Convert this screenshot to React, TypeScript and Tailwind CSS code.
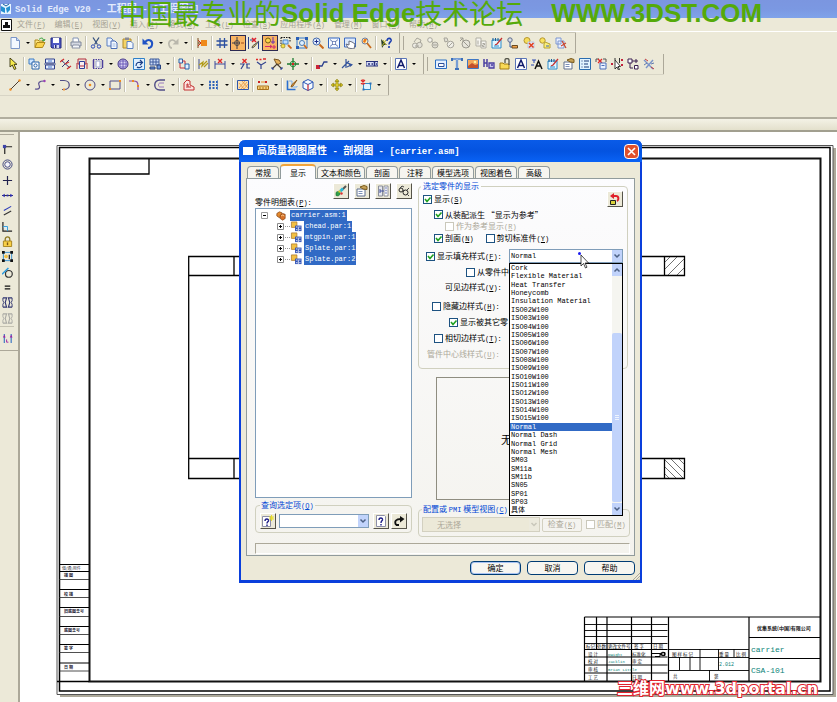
import { useState } from 'react'
import type { ReactNode } from 'react'
import clsx from 'clsx'

const CJK = 'font-["Noto_Sans_CJK_SC",sans-serif]'
const MONO = 'font-["Liberation_Mono","Noto_Sans_CJK_SC",monospace]'

type LineProps = { d: string; c?: string; f?: string; w?: number }

function P({ d, c = '#23236b', f = 'none', w = 1 }: LineProps) {
  return <path d={d} stroke={c} fill={f} strokeWidth={w} />
}

// All glyphs live on a 12x12 grid
const icons: Record<string, ReactNode> = {
  // standard bar
  new: <><P d="M2 .5h5.500l3 3v8H2z" c="#7b96c8" f="#f3f8ff" /><P d="M7.500 .5v3h3" c="#7b96c8" f="#c5d8f5" /></>,
  open: <><P d="M1 10.500V3h3l1 1h4v2" c="#b08a1c" f="#ffe680" /><P d="M1 10.500l2-5h8l-2.500 5z" c="#b08a1c" f="#fbd34b" /><P d="M5 2.500c2-2 4-2 5 1M8 3l2 1 1-2" c="#2d9c33" /></>,
  save: <><P d="M1 1h10v10H2L1 10z" c="#242a80" f="#4f58c4" /><path d="M3 1h6v5H3z" fill="#fff" /><path d="M4 8h5v3H4z" fill="#d6daf4" /><path d="M5 8h1.500v3H5z" fill="#242a80" /></>,
  print: <><P d="M3 5V1h5l1 4" c="#8393b5" f="#fff" /><P d="M1 5h10v4H1z" c="#7f8799" f="#d4d8e2" /><P d="M3 8h6l1 3H2z" c="#8b93a5" f="#f4f6fa" /></>,
  cut: <><P d="M3 .5l4.500 7M9 .5l-4.500 7" c="#35507f" w={1.3} /><circle cx="3" cy="9.500" r="1.700" fill="none" stroke="#2b49b5" /><circle cx="9" cy="9.500" r="1.700" fill="none" stroke="#2b49b5" /></>,
  copy: <><P d="M1 1h4l2 2v6H1z" c="#5b7fc0" f="#eaf2ff" /><P d="M5 4h4l2 2v5.500H5z" c="#4a6db5" f="#f6faff" /><P d="M6.500 7h3M6.500 9h3" c="#9fb9e4" /></>,
  paste: <><P d="M1 2h8v9H1z" c="#b18a29" f="#f4d468" /><path d="M3 .5h4v2.500H3z" fill="#8b8b95" /><P d="M5 4.500h4l2 2v5H5z" c="#5b7fc0" f="#f3f8ff" /></>,
  undo: <><P d="M3 5c4-4 8-1 7 3-.5 2-2 3-4 3" c="#1f52c4" w={2} /><path d="M.5 1.500v6h6z" fill="#1f52c4" /></>,
  redo: <><P d="M9 5C5 1 1 4 2 8c.5 2 2 3 3 3" c="#b9b7ac" w={1.600} /><path d="M11.500 1.500v6h-6z" fill="#b9b7ac" /></>,
  flag: <><P d="M2 1v10M2 6h3" c="#7a4c22" /><path d="M5 3h6v6H5z" fill="#ef8a1a" /><P d="M2 3l3 3-3 3" c="#c8321f" /></>,
  grid: <P d="M4 1v10M8.500 1v10M.5 4h11M.5 8h11" c="#2b4fa0" w={1.300} />,
  target: <><circle cx="5" cy="6" r="2.500" fill="none" stroke="#5a5348" /><P d="M5 0v12M0 6h8" c="#3b3a48" /><P d="M9 6h3" c="#a14a1a" /></>,
  dimedit: <><P d="M.5 0v12M10.500 5v7M2 3h5" c="#29408f" /><P d="M4 1l4 4M8 1l-4 4" c="#e0202c" w={1.500} /><P d="M11 4l-5 6-2 1 .5-2z" c="#555" f="#f5d76b" /></>,
  relate: <><circle cx="4" cy="3.500" r="2.500" fill="#f8d44a" stroke="#7a5f15" /><P d="M9 0v7M7 5h4" c="#6a2eb1" /><P d="M1 9.500h7M6 8l2 1.500L6 11M9 9h2v2H9z" c="#d22a6e" /></>,
  zoomarea: <><path d="M1 .5h9M1 .5v8M10 .5v5" stroke="#111" strokeDasharray="1.500 1" /><P d="M3 3h5v4H3z" c="#4b86c8" f="#bcdcff" /><circle cx="3" cy="9" r="2" fill="#f8e04a" stroke="#7a7010" strokeWidth=".6" /><P d="M8 8l3.500 3.500" c="#cc6a1e" w={1.800} /></>,
  zoomwin: <><P d="M1 1h10v10H1z" c="#3478cc" /><path d="M0 0h3v3H0zM9 0h3v3H9zM0 9h3v3H0z" fill="#2a5fb5" /><circle cx="6" cy="6" r="2.500" fill="#dff1ff" stroke="#4a7bb8" /><P d="M8 8l3 3.500" c="#cc6a1e" w={1.800} /></>,
  zoomin: <><circle cx="4.500" cy="4.500" r="3.500" fill="#e6f2ff" stroke="#3f64aa" /><P d="M4.500 2.500v4M2.500 4.500h4" c="#1a2d88" /><P d="M7.500 7.500l4 4" c="#c96a1c" w={2} /></>,
  fit: <><P d="M.5 1h11v10H.5z" c="#2f63c0" f="#f4f9ff" /><P d="M2 2.500l8 7M10 2.500l-8 7" c="#35539b" w={.8} /><path d="M4.500 4.500h3v3h-3z" fill="#fff" stroke="#35539b" strokeWidth=".6" /></>,
  pan: <><P d="M.5 1h11v9H.5z" c="#3d6ac0" f="#dbe8fb" /><P d="M4 11L2 7l3 1V4l3 1 3 2-1 5z" c="#6a6f80" f="#fff" /></>,
  refresh: <><circle cx="5" cy="4" r="3" fill="#fff4b8" stroke="#6e7ea6" /><P d="M7 6l4 5" c="#c96a1c" w={1.800} /><path d="M4 2h3L5 6 3 5z" fill="#ee7a1a" /></>,
  help: <><path d="M1 2l6 6H4l-2 3z" fill="#2a3f2b" /><P d="M2 9l4-6M6 8l-3-5" c="#b2b02a" /><P d="M7 4c0-4 5-3 4 0-.5 1-2 1.500-2 3.500M9 9v2" c="#1c3fb0" w={1.600} /></>,
  g1: <><circle cx="4" cy="8.500" r="2.500" fill="#ecebe4" stroke="#a7a59b" /><circle cx="8.500" cy="8" r="2.700" fill="#e4e2d8" stroke="#a7a59b" /><P d="M3 5l3-4 4 2-1 3M4 9h4" c="#a7a59b" /></>,
  g2: <><circle cx="3" cy="3" r="2.300" fill="#f5f4ee" stroke="#a7a59b" /><circle cx="8" cy="8" r="3" fill="#dedcd2" stroke="#a7a59b" /><P d="M6 8h4M4 4l3 2" c="#a7a59b" /></>,
  g3: <><circle cx="7.500" cy="7.500" r="3.300" fill="#f0efe8" stroke="#a7a59b" /><P d="M1 1l3 0 1 3-3 1zM5.500 9.500l4-4" c="#a7a59b" f="#e2e0d6" /></>,
  g4: <><circle cx="7" cy="7" r="4" fill="#e6e4da" stroke="#9c9a90" /><P d="M4 4l6 6M1 1h3v3M1 4l3-3" c="#9c9a90" /></>,
  g5: <><P d="M1 1h5v8H1zM6 4h5v7H6z" c="#b1afa5" f="#f7f6f1" /><P d="M3 3.500v4M7.500 6.500h2v1.500h-2v1.500h2" c="#a7a59b" /></>,
  sheet: <><P d="M1 3h9v8H1z" c="#2b8bc9" f="#e4f6ff" /><P d="M2 1v3M4.500 1v3M7 1v3" c="#1b5e98" /><P d="M11 1L6 7l-2 1" c="#c23030" w={1.300} /><P d="M3 9h5" c="#2b8bc9" /></>,
  balloon: <><circle cx="3" cy="3" r="2.200" fill="#d7ddea" stroke="#5e6a86" /><P d="M3 5v5h3" c="#3b5ba0" /><P d="M5 8.500h5.500v2.500H5z" c="#6a4a20" f="#f2a24b" /></>,
  lockx: <><circle cx="4" cy="3.500" r="3" fill="#f6dc5b" stroke="#b5962f" /><P d="M5 5h6v6H5z" c="#b9c8e6" f="#eef3ff" /><P d="M6 6l4.500 4.500M10.500 6L6 10.500" c="#e0401f" w={1.600} /></>,
  lock2: <><circle cx="3.500" cy="3.500" r="2.700" fill="#f9e35f" stroke="#b5962f" /><P d="M6 5l5 2v4H5V7z" c="#b7a330" f="#fbef7a" /><P d="M7 9h3" c="#3a62b5" /></>,
  sheets: <><P d="M1 1h5v6H1zM3 4h6v7H3z" c="#7c96d0" f="#eaf1ff" /><P d="M7 4l4 7M6 9l5-3" c="#c9452e" w={1.200} /></>,
  // drawing view bar
  pointer: <><path d="M2 0v9l2.300-2 2 4.500 1.700-.8-2-4.300h3z" fill="#f6ea4c" stroke="#3a3510" strokeWidth=".9" /></>,
  v1: <><P d="M1 1h5v5H1z" c="#3c7ac4" f="#cfe6ff" /><P d="M4 4h7v7H4z" c="#2460a8" f="#fff" /><circle cx="7.500" cy="7.500" r="1.600" fill="none" stroke="#2460a8" /></>,
  v2: <><P d="M1.500 1h9v4h-9zM1.500 7h9v4h-9z" c="#2d3f8c" f="#e7efff" /><P d="M0 6h12" c="#2d3f8c" w={.8} /><P d="M4 3h4M4 9h4" c="#4b7fd0" /></>,
  v3: <><P d="M1 2l9 8M2 9l7-7" c="#3b3b7b" /><P d="M0 4l4-3M7 11l4-3M5 6l4-2" c="#d12f2f" w={1.300} /></>,
  v4: <><P d="M2 1h8v5H2zM1 11V5M11 11V5" c="#b32a3c" /><P d="M3.500 3.500h5v7h-5z" c="#2f3f9a" f="#f8eef2" /><P d="M4 8h4" c="#b32a3c" /></>,
  v5: <><path d="M1 1.500h10M1 10.500h10" stroke="#4b3f9c" strokeDasharray="1.500 1" /><P d="M1.500 2v8M10.500 2v8" c="#4b3f9c" w={1.500} /><path d="M4 3h4v6H4z" fill="#fff" stroke="#9aa4d0" /></>,
  v6: <><circle cx="6" cy="6" r="5" fill="#d9d4f3" stroke="#3d2f86" /><P d="M3 3h6v6H3zM1.500 6h9M6 1.500v9" c="#5a4ab0" w={.8} /></>,
  v7: <><P d="M.5 .5h11v11H.5z" c="#2f80c8" f="#dff0ff" /><P d="M3 8c0-4 3-4 6-3.500M7 2l2.500 2.500L7 7M9 8c-1 2-4 2-5 1" c="#1c3f86" w={1.200} /></>,
  v8: <><P d="M1 1h9v6H1zM1 4h9M4 1v6M7 1v6" c="#3c5a9c" f="#cddcf6" /><P d="M1 9h5v2H1zM8 7h3.500v4H8z" c="#27407d" f="#6b94d8" /></>,
  v9: <><P d="M1 1h3.500v4H1zM7 6h4v5H7z" c="#2460a8" f="#e2f0ff" /><P d="M2 5v5h5M4.500 3H7v3" c="#c22f3f" /></>,
  d1: <><P d="M1 1v10M11 1v10" c="#3b4b8b" /><P d="M1 7l4-3-1 4 5-5M6 9l4-4" c="#b09a18" w={1.200} /></>,
  d2: <><P d="M1 3v8M11 3v8M1 6h10" c="#3b4b9b" /><P d="M4 1l4 4M8 1L4 5" c="#e02828" w={1.400} /></>,
  d3: <><P d="M3.500 1l4 4M7.500 1l-4 4" c="#e02828" w={1.400} /><P d="M1 6h4l-3 5M7 6h4M8 6v4h3" c="#33448f" w={1.200} /></>,
  d4: <><P d="M1 1.500h2M4.500 1.500h2M8 1h3" c="#e02828" w={1.600} /><P d="M2 4l4 3M11 4L6 7v4" c="#33448f" w={1.200} /></>,
  d5: <><P d="M3 1l5 1 2 3-4 2z" c="#7a5520" f="#e9b45a" /><P d="M1 11l5-5 5 5" c="#4a3d30" w={1.200} /><P d="M1 9v2h2M11 9v2H9" c="#2a49aa" /></>,
  d6: <><circle cx="6" cy="6" r="2.800" fill="none" stroke="#2c9440" /><P d="M6 0v12M0 6h12" c="#1e7b32" w={1.300} /><path d="M5 5h2v2H5z" fill="#d22" /></>,
  d7: <><path d="M0 7h4v4H0z" fill="#cc2538" /><P d="M3 8h3l2-4h3.500" c="#2b3f8d" w={1.300} /></>,
  d8: <><P d="M1 10l7-7M5 1v9M5 4l5 3-4 2" c="#35559d" w={1.200} /><path d="M8 5l4 1.500L9 9z" fill="#35559d" /></>,
  d9: <><P d="M0 3.500h12v4.500H0z" c="#26307c" f="#d8ddf6" /><P d="M2 6h2M5.500 6h1.500M8.500 4v4M10 6h1" c="#26307c" w={1.500} /></>,
  letter: <><P d="M.5 .5h11v11H.5z" c="#5b76b8" f="#fff" /><P d="M2.500 10L6 2l3.500 8M4 7.500h4" c="#101a6a" w={1.500} /></>,
  frame: <><P d="M.5 2h11v8.500H.5z" c="#2b6fc4" f="#e4f0ff" /><P d="M3.500 5.500h5.500v3H3.500z" c="#2b4f9a" f="#fff" /></>,
  tee: <><P d="M1 3V1h10v2M6 1v10M4 11h4" c="#3d6fb8" w={2.200} /><P d="M2 1h8M6 1v9" c="#cfe3ff" w={.8} /></>,
  image: <><P d="M.5 1.500h11v9H.5z" c="#3f77c4" f="#f2a65a" /><path d="M1 8l4-3 3 2 3-1v4H1z" fill="#c2512b" /><circle cx="8" cy="4" r="1.300" fill="#fff2a0" /></>,
  link: <><P d="M1 1v8M4 1v8M1 5h3" c="#4a3fa0" w={1.500} /><P d="M6 5h5v5H6zM8 7h2" c="#4a3fa0" f="#c9c4ee" w={1.300} /></>,
  attach: <><P d="M1 11V5h3l1 1h5v5z" c="#a37d14" f="#f9d955" /><P d="M6 5V2c0-2 4-2 4 0v5" c="#55554a" w={1.300} /></>,
  style: <><P d="M4 11l3.500-8L11 11M5 8h5" c="#111" w={1.500} /><P d="M1 2h4M3 2v3M0 7h3" c="#2a46b0" /></>,
  props: <><P d="M1 4h8v7H1z" c="#5f6f8f" f="#fff" /><P d="M2.500 6.500h4M2.500 8.500h4" c="#7b8fb8" /><P d="M4 2l4-1.500 3 1v3L7 4z" c="#7a5a1a" f="#c7a35a" /></>,
  list: <><P d="M.5 .5h11v11H.5z" c="#2a6db0" f="#e2f4ff" /><P d="M2.500 3h1M2.500 6h1M2.500 9h1M5 3h5M5 6h4M5 9h5" c="#1b3a77" /></>,
  tbl: <><P d="M1 4V1h3M8 1h3v3" c="#555" /><P d="M3 1l4 4M7 1L3 5" c="#e02828" w={1.300} /><P d="M5 5h6v6H5z" c="#4a6fb8" f="#eaf2ff" /><P d="M6.500 7.500h3" c="#4a6fb8" /></>,
  pickpt: <><path d="M4 2v9l2-2 1.500 3 1-.5L7 8.500h2.500z" fill="#fff" stroke="#111" strokeWidth=".8" /><path d="M0 5h2v2H0zM10 1h2v2h-2zM10 6h2v2h-2z" fill="#c2223a" /><P d="M4 0v2M8.500 0v5" c="#333" /></>,
  nodes: <><P d="M1 1h4v4H1zM7.500 7.500h3.500V11H7.500z" c="#3b1f4f" f="#fff" /><P d="M5 3h6M9 1v4M3 5v5h3" c="#3b1f4f" /></>,
  pins: <><P d="M1 2l9 9M3 10l7-8" c="#7a93c8" w={1.400} /><P d="M2 1l3 2M8 9l3 2" c="#c53d3d" /><P d="M1 7l3-2M8 6l3-1" c="#6079ae" /></>,
  // sketch bar
  line: <><P d="M1.500 10.500l9-9" c="#4a3b30" /><circle cx="1.500" cy="10.500" r="1.200" fill="#f08a1d" /><circle cx="10.500" cy="1.500" r="1.200" fill="#f08a1d" /></>,
  curve: <><P d="M1 10c5 1 5-2 4-4s0-4 5-4" c="#5b5090" w={1.200} /><circle cx="10.500" cy="2" r="1.200" fill="#9b3fb5" /></>,
  arc: <><P d="M1 1.500h4c7 0 7 9 0 9H3" c="#4f4c86" w={1.200} /><path d="M4 9.500h2v2H4z" fill="#ef9a3c" /></>,
  circle: <><circle cx="6" cy="6" r="5" fill="none" stroke="#4f4c86" /><circle cx="6" cy="6" r="1.300" fill="#f08a1d" /></>,
  rect: <><P d="M1 2h10v8H1z" c="#4f4c86" /><path d="M0 9h2v2H0zM10 1h2v2h-2z" fill="#f08a1d" /></>,
  fillet: <><P d="M0 2h4c4 0 5 1 5 5v4" c="#8a4fa5" w={1.200} /><path d="M3 1h2v2H3zM8 6h2v2H8z" fill="#f08a1d" /></>,
  offset: <><P d="M11 1H6C-1 1-1 11 6 11h5" c="#4f4c86" w={1.400} /><P d="M10 4H6c-2 0-2 4 0 4h4" c="#9a7ac0" /></>,
  region: <><P d="M1 11V4l3-3 3 1v4l4 2v3z" c="#c23030" f="#fbe3e0" /><P d="M4 9V5h1v3h3" c="#c23030" /></>,
  pattern: <><path d="M1 3h10M1 6h10M1 9h10" stroke="#2a5fb5" strokeWidth="1.800" strokeDasharray="2 1.500" /><P d="M2 1v10M9.500 1v10" c="#5b86cc" w={.7} /></>,
  fill: <><path d="M.5 1.500h11v9H.5z" fill="#fbe0b4" stroke="#2f56ad" /><path d="M2 9l6-7M4 10l6-7M7 10l4-5M2 4l5 6M5 2l6 7" stroke="#e88b2b" strokeWidth=".7" /></>,
  ruler: <><path d="M1 2h2v2H1zM8 2h2v2H8z" fill="#c22" /><P d="M4 3h4" c="#e88b2b" /><P d="M.5 7h11v3.500H.5z" c="#a8701d" f="#f9d27a" /><P d="M3 8v2M6 8v2M9 8v2" c="#a8701d" /></>,
  sketch: <><P d="M1.500 1.500v9h8" c="#2a6fd0" w={1.600} /><P d="M3 2h3v6h5V7" c="#7fb0ea" /><P d="M11 1L6 5.500 5 8l2-1z" c="#8b5a1a" f="#f0a84a" /></>,
  cube: <><P d="M6 .5l5 2.500v6L6 11.500 1 9V3z" c="#2a55b5" f="#f6fbff" /><P d="M1 3l5 2.500L11 3" c="#2a55b5" /><P d="M6 5.500v6" c="#c8303f" w={1.300} /></>,
  move: <><P d="M6 1v10M1 6h10" c="#7d7310" w={2.600} /><P d="M6 1.500v9M1.500 6h9" c="#f5e23a" w={1.200} /><path d="M6 0l2 2.500H4zM6 12l2-2.500H4zM0 6l2.500-2v4zM12 6L9.500 4v4z" fill="#d8c51e" stroke="#7d7310" strokeWidth=".5" /></>,
  dim3: <><P d="M3.500 4.500h7v6h-7z" c="#2f8bc8" f="#dff3ff" /><P d="M1 1l4 4M5 1L1 5M3 0v6" c="#e02828" w={1.100} /><path d="M2.500 9.500h2v2h-2zM9.500 3.500h2v2h-2z" fill="#2f6fb8" /></>,
  // relationship bar
  connect: <><P d="M3 11V3h8" c="#222" w={1.300} /><path d="M1 1h3.500v3.500H1z" fill="#3c44a8" /></>,
  concentric: <><circle cx="6" cy="6" r="5" fill="none" stroke="#3a3f7c" /><circle cx="6" cy="6" r="3" fill="#f4f4fa" stroke="#3a3f7c" /></>,
  plus: <P d="M6 1v10M1 6h10" c="#22224f" w={1.300} />,
  collinear: <><P d="M0 6h12" c="#222" /><path d="M3 4v4L0 6zM9 4v4l3-2z" fill="#2a2ab8" /><path d="M5 5h2v2H5z" fill="#2a2ab8" /></>,
  parallel: <><P d="M2 6l8-4.500" c="#2a3ab8" w={1.200} /><P d="M2 11l8-4.500" c="#333" w={1.200} /></>,
  perp: <><P d="M1 1v10h10" c="#222" w={1.300} /><P d="M1 6h5v5" c="#2f9ad8" f="#d6efff" /></>,
  lock: <><P d="M3.500 6V3.500C3.500 0 8.500 0 8.500 3.500V6" c="#8f7a20" w={1.400} /><P d="M1.500 5.500h9v6h-9z" c="#a3801a" f="#f8cf45" /><P d="M6 7v3" c="#7a5410" w={1.500} /></>,
  rigid: <><P d="M1.500 1.500h9v9h-9z" c="#2f8bd0" /><path d="M0 0h3v3H0zM9 0h3v3H9zM9 9h3v3H9zM0 9h3v3H0z" fill="#111" /><circle cx="4.500" cy="6" r="2" fill="#f2c040" /><P d="M8 4v5" c="#222" w={1.400} /></>,
  tangent: <><circle cx="7.500" cy="7.500" r="3.700" fill="none" stroke="#333" strokeWidth="1.300" /><P d="M0 8l7-7" c="#2a9ae0" w={1.600} /></>,
  equal: <P d="M3 4.500h6M3 7.500h6" c="#111" w={1.600} />,
  sym: <><P d="M1 1h4l-1.500 5L5 11H1M11 1H7l1.500 5L7 11h4" c="#2f3470" w={1.200} /><P d="M1 1v3l1 2-1 2v3M11 1v3l-1 2 1 2v3" c="#2f3470" /></>,
  symoff: <><P d="M1 1h4l-1.500 5L5 11H1M11 1H7l1.500 5L7 11h4" c="#a9a9a4" w={1.200} /><P d="M1 1v3l1 2-1 2v3M11 1v3l-1 2 1 2v3" c="#a9a9a4" /></>,
  handles: <><P d="M2.500 1v10M10 1v10" c="#2f6fc0" w={1.200} /><path d="M1 5l1.500-3L4 5zM8.500 5L10 2l1.500 3z" fill="#a020a0" /><P d="M5 7v3h2" c="#a020a0" /></>,
  // dialog
  brush: <><P d="M11 1L7 5" c="#555" w={2} /><path d="M4 5.500l3-3 2 2-3 3z" fill="#2ab8d8" /><path d="M1 7.500c2-2 4-1 4 1s-2 3-4 2z" fill="#2fa04a" stroke="#156a2a" strokeWidth=".6" /><path d="M3.500 5.500h2v2h-2z" fill="#e8d128" /><circle cx="6.500" cy="8.500" r="1.200" fill="#d33" /></>,
  tree: <><P d="M1.500 1h4v10h-4z" c="#8b8f9b" f="#e5e7ee" /><P d="M7 1h4v10H7z" c="#8b8f9b" f="#fff" /><P d="M3 6h4M3 4v4" c="#3f4fa0" /><P d="M8.500 3h1M8.500 5.500h1M8.500 8h1" c="#3f4fa0" w={1.300} /></>,
  glasses: <><circle cx="3" cy="5" r="2" fill="none" stroke="#222" /><circle cx="7.500" cy="7.500" r="2.500" fill="none" stroke="#222" /><P d="M5 5l1 1M2 3l2-2 2 1M9 5l2-2M9.500 9.500l1.500 1.500" c="#444" /></>,
  restore: <><P d="M3 3h4c3 0 3 4 1 5" c="#e0202a" w={2} /><path d="M5 0v6L1 3z" fill="#e0202a" /><P d="M1.500 7.500h5v4h-5z" c="#222" f="#d9d23a" /></>,
  query: <><P d="M1.500 .5h8l1 1v10h-9z" c="#8d8fa8" f="#fff" /><P d="M4 5c0-3 4-2.500 3.500 0C7 6 6 6 6 8M6 9v1.500" c="#1d1d86" w={1.400} /></>,
  querynew: <><P d="M.5 1.500h8v10h-8z" c="#8d8fa8" f="#fff" /><P d="M3 6c0-3 4-2.500 3.500 0C6 7 5 7 5 8.500M5 9.500V11" c="#1d1d86" w={1.400} /><P d="M9.500 0v6M7 3h5M7.500 1l4 4M11.500 1l-4 4" c="#e8de2a" /></>,
  turn: <><P d="M3 10c-2-4 0-6 5-6M3 10h3" c="#111" w={1.800} /><path d="M7 1l4.500 3L7 7.500z" fill="#111" /></>,
  part: <><path d="M1 1h6v6H1z" fill="#f2c043" stroke="#a8742a" strokeWidth=".8" /><path d="M5 5h7v6H5z" fill="#2c4fb5" /><path d="M6 6.500h1.500M9.500 6.500H11M6 9.500h1.500M9.500 9.500H11M8.500 6v5" stroke="#fff" strokeWidth=".9" /></>,
  asm: <><path d="M1 3l3-2 3 1v4l-3 2-3-2z" fill="#e58a2c" stroke="#7d3d10" strokeWidth=".8" /><path d="M5 5l3-2 3 1v5l-3 2-3-2z" fill="#d8722a" stroke="#7d3d10" strokeWidth=".8" /><path d="M6 6l2-1 2 1" stroke="#fbd99a" fill="none" /></>,
}

function Icon({ name, size = 'size-3' }: { name: string; size?: string }) {
  return (
    <svg viewBox="0 0 12 12" className={clsx(size, 'block shrink-0')} aria-hidden="true">
      {icons[name]}
    </svg>
  )
}

// "v" is a drop-down arrow, "|" a divider, a leading "*" marks a pressed button
function Bar({ items, label, grip, className }: { items: string; label: string; grip?: boolean; className?: string }) {
  return (
    <div role="toolbar" aria-label={label} className={clsx('flex h-5 items-center border-r border-[#aca899]', className)}>
      {grip && <span className="mr-[5px] h-3.5 w-px bg-[#aca899]" />}
      {items.split(' ').map((item, i) => {
        if (item === '|') return <span key={i} className="mx-px h-3.5 w-0.5 border-l border-[#c5c2b2] bg-white" />
        if (item === 'v')
          return (
            <button key={i} aria-label="more" className="flex h-4 w-[9px] items-center justify-center">
              <svg viewBox="0 0 4 2" className="h-0.5 w-1"><path d="M0 0h4L2 2z" /></svg>
            </button>
          )
        const on = item.startsWith('*')
        const name = on ? item.slice(1) : item
        return (
          <button
            key={i}
            aria-label={name}
            className={clsx('flex h-4 w-4 shrink-0 items-center justify-center', on && 'border border-[#2b2a52] bg-[#f9b563]')}
          >
            <Icon name={name} />
          </button>
        )
      })}
    </div>
  )
}

// Caption followed by its access key, e.g. 文件(F)
function Caption({ text, k, colon }: { text: string; k?: string; colon?: boolean }) {
  return (
    <span className="whitespace-nowrap">
      {text}
      {k && <span className={clsx(MONO, 'text-[7px]')}>(<u>{k}</u>){colon && ':'}</span>}
    </span>
  )
}

type CheckProps = { text: string; k?: string; on?: boolean; disabled?: boolean; className?: string }

function Check({ text, k, on = false, disabled, className }: CheckProps) {
  const [checked, setChecked] = useState(on)
  return (
    <label className={clsx('flex items-center gap-0.5', disabled && 'text-[#aca899]', className)}>
      <span className="grid size-[9px] shrink-0">
        <input
          type="checkbox"
          checked={checked}
          disabled={disabled}
          onChange={(e) => setChecked(e.target.checked)}
          className="col-start-1 row-start-1 size-[9px] appearance-none border border-[#1d5281] bg-white disabled:border-[#cac8bb]"
        />
        {checked && (
          <svg viewBox="0 0 9 9" className="pointer-events-none col-start-1 row-start-1 size-[9px]">
            <path d="M2 4l2 2.500L7.500 2.500" fill="none" stroke="#21a121" strokeWidth="1.600" />
          </svg>
        )}
      </span>
      <Caption text={text} k={k} colon={k !== undefined && text.endsWith('样式')} />
    </label>
  )
}

function Chevron({ up, muted }: { up?: boolean; muted?: boolean }) {
  return (
    <svg viewBox="0 0 10 12" className={clsx('pointer-events-none h-full w-2.5 shrink-0', muted ? 'bg-[#eceadd]' : 'bg-[#c1d3fb]')}>
      <path d={up ? 'M2.500 7.500L5 5l2.500 2.500' : 'M2.500 4.500L5 7l2.500-2.500'} fill="none" stroke={muted ? '#c9c7ba' : '#4d6185'} strokeWidth="1.500" />
    </svg>
  )
}

function ToolButton({ name }: { name: string }) {
  return (
    <button
      aria-label={name}
      className="flex size-4 items-center justify-center border border-t-white border-r-[#55534a] border-b-[#55534a] border-l-white bg-[#ece9d8]"
    >
      <Icon name={name} />
    </button>
  )
}

const menus = [
  ['文件', 'F'], ['编辑', 'E'], ['视图', 'V'], ['插入', 'I'], ['格式', 'O'], ['工具', 'L'],
  ['检查', 'S'], ['应用程序', 'A'], ['管理', 'M'], ['窗口', 'W'], ['帮助', 'H'],
]

const relations = [
  'connect', 'concentric', 'plus', 'collinear', 'parallel', 'perp',
  'lock', 'rigid', 'tangent', 'equal', 'sym', 'symoff',
]

const tabs = [
  { name: '常规', width: 'w-8' },
  { name: '显示', width: 'w-9' },
  { name: '文本和颜色', width: 'w-12' },
  { name: '剖面', width: 'w-8' },
  { name: '注释', width: 'w-8' },
  { name: '模型选项', width: 'w-[42px]' },
  { name: '视图着色', width: 'w-[42px]' },
  { name: '高级', width: 'w-8' },
]

const fillStyles = [
  'Cork', 'Flexible Material', 'Heat Transfer', 'Honeycomb', 'Insulation Material',
  'ISO02W100', 'ISO03W100', 'ISO04W100', 'ISO05W100', 'ISO06W100', 'ISO07W100', 'ISO08W100',
  'ISO09W100', 'ISO10W100', 'ISO11W100', 'ISO12W100', 'ISO13W100', 'ISO14W100', 'ISO15W100',
  'Normal', 'Normal Dash', 'Normal Grid', 'Normal Mesh', 'SM03', 'SM11a', 'SM11b', 'SN05',
  'SP01', 'SP03', '具体',
]

const parts = ['chead.par:1', 'mtgpin.par:1', 'Splate.par:1', 'Splate.par:2']

const revisionRows = [
  { y: 577, text: '描 图' },
  { y: 596, text: '校 描' },
  { y: 613, text: '旧底图总号' },
  { y: 632, text: '底图总号' },
  { y: 650, text: '签 字' },
  { y: 669, text: '日 期' },
]

function Drawing() {
  return (
    <svg viewBox="20 132 817 570" className="block w-full" fontFamily='"Noto Sans CJK SC", sans-serif'>
      <path d="M833 148h3v549H60v-3h773z" fill="#aca899" />
      <path d="M57 145.500h776v549H57z" fill="#fff" stroke="#555" />
      <path d="M59.500 147.500h770.500v543.500H59.500z" fill="none" stroke="#000" strokeWidth="1.500" />
      <path d="M89.500 158.500H820.500v523H89.500z" fill="none" stroke="#111" strokeWidth="2" />
      <path d="M57 681.500h32M89.500 174h59.500v-15" fill="none" stroke="#000" strokeWidth="1.300" />

      {/* section view of the carrier */}
      <g fill="none" stroke="#000" strokeWidth="1.300">
        <path d="M300 256.500H188.700v222H300M188.700 275.500H300M188.700 458.500H300M234 256.500v19M234 458.500v20" />
        <path d="M600 256.500h84.500v19H600M664.500 256.500v19M600 458.500h84.500v20H600M664.500 458.500v20" />
      </g>
      <path d="M665 262l5-5M665 269l12-12M668 275l16-16M677 275l7-7M665 474l4 4M665 467l11 11M665 460l18 18M671 459l13 13M679 459l5 5" stroke="#333" strokeWidth=".7" />

      {/* revision strip on the left margin */}
      <path d="M59 564.500h30M59 571.500h30M59 589.500h30M59 607.500h30M59 626.500h30M59 644.500h30M59 663h30" stroke="#000" strokeWidth="1.200" />
      <path d="M59 579.500h30M59 597.500h30M59 616.500h30M59 634.500h30M59 652.500h30M59 671h30" stroke="#222" strokeWidth=".8" />
      <text x="62" y="570" fontSize="4" fill="#334">借(通)用件</text>
      {revisionRows.map((row) => (
        <text key={row.y} x="64" y={row.y} fontSize="4" fontWeight="bold" fill="#223">{row.text}</text>
      ))}

      {/* title block */}
      <path d="M584.500 617H820M584.500 649.500h83M584.500 657h83M584.500 665h83M584.500 673h83M668.500 617v64M749 617v64M749 637.500h71M749 658.500h71M584.500 617v64M596.500 617v32M607 617v64M631.500 617v64M651.500 617v64" stroke="#000" strokeWidth="1.200" fill="none" />
      <path d="M584.500 624.500h83M584.500 630.500h83M584.500 636.500h83M584.500 643.500h83M668 649.500h81M668 657.500h81M668 670.500h81M679.500 657v13M690 657v13M700 649v21M718.500 649v21M734 649v8M709.500 670v11" stroke="#000" strokeWidth=".9" fill="none" />
      <g fontSize="4.500" fill="#111">
        <text x="586" y="648">标记</text>
        <text x="597" y="648">处数</text>
        <text x="608" y="648">更改文件号</text>
        <text x="634" y="648">签 字</text>
        <text x="653" y="648">日 期</text>
        <text x="588" y="655.500">设 计</text>
        <text x="588" y="663">校 对</text>
        <text x="588" y="671">审 核</text>
        <text x="588" y="679">工 艺</text>
        <text x="632" y="655.500">标准化</text>
        <text x="632" y="663">审 定</text>
        <text x="632" y="679">日 期</text>
        <text x="672" y="655.500">图 样 标 记</text>
        <text x="719" y="655.500">重 量</text>
        <text x="736" y="655.500">比 例</text>
        <text x="673" y="678">共</text>
        <text x="714" y="678">第</text>
        <text x="757" y="629.500" fontSize="5" fontWeight="bold">优集系统(中国)有限公司</text>
      </g>
      <path d="M651 653.500h9v3l-5 0M660 653.500l5-1v3l-5-1" fill="none" stroke="#000" />
      <circle cx="663" cy="654" r="1.800" fill="none" stroke="#000" />
      <g fill="#0a8378" fontFamily='"Liberation Mono", monospace' fontSize="4">
        <text x="608" y="655.500">Dwight</text>
        <text x="608" y="663">Jacklin</text>
        <text x="608" y="671">Brian Little</text>
        <text x="719" y="666" fontSize="5">2.012</text>
        <text x="751" y="652" fontSize="8">carrier</text>
        <text x="751" y="673" fontSize="8">CSA-101</text>
      </g>
      <text x="617" y="694" fontSize="16" fill="#fff" stroke="#e0232e" strokeWidth="2" paintOrder="stroke" fontFamily='"DejaVu Sans", "Noto Sans CJK SC", sans-serif' fontWeight="bold">
        三维网www.3dportal.cn
      </text>
    </svg>
  )
}

function PropertiesDialog() {
  const [tab, setTab] = useState('显示')
  const [fillStyle, setFillStyle] = useState('Normal')

  return (
    <section
      role="dialog"
      aria-label="高质量视图属性"
      className="absolute top-[140px] left-[239px] flex h-[443px] w-[403px] flex-col rounded-t-md border-2 border-t-0 border-b-[3px] border-[#0a3fdc] bg-[#ece9d8] text-[8px] leading-[10px] text-black"
    >
      <header className="-mx-0.5 flex h-[22px] shrink-0 items-center rounded-t-md bg-linear-to-b from-[#0a5be8] via-[#0453e0] to-[#0a62f5] pr-[3px] pl-1 text-white">
        <span className="mr-1 h-2 w-2.5 bg-white" />
        <h1 className="text-[10px] leading-[16px] font-bold whitespace-pre">
          高质量视图属性<span className={clsx(MONO, 'text-[9px]')}> - </span>剖视图
          <span className={clsx(MONO, 'text-[9px]')}> - [carrier.asm]</span>
        </h1>
        <button aria-label="关闭" className="ml-auto flex size-[15px] items-center justify-center rounded-sm border border-white bg-[#e0502c]">
          <svg viewBox="0 0 9 9" className="size-[9px]"><path d="M1 1l7 7M8 1L1 8" stroke="#fff" strokeWidth="1.600" /></svg>
        </button>
      </header>

      <div role="tablist" className="mx-[5px] mt-0.5 flex h-3.5 shrink-0 items-end gap-px pl-px">
        {tabs.map((t) => (
          <button
            key={t.name}
            role="tab"
            aria-selected={tab === t.name}
            onClick={() => setTab(t.name)}
            className={clsx(
              'rounded-t-sm border border-b-0 border-[#919b9c] text-center whitespace-nowrap',
              t.width,
              tab === t.name ? 'z-10 -mb-px h-[15px] border-t-2 border-t-[#f0a33a] bg-[#fcfcfe]' : 'h-3 bg-[#f6f5f0]',
            )}
          >
            {t.name}
          </button>
        ))}
      </div>

      <div className="mx-[5px] flex h-[378px] shrink-0 flex-col border border-[#919b9c] bg-linear-to-b from-[#fcfcfe] to-[#f4f3ee] pr-1 pl-2">
        <div className="grid grid-cols-[157px_minmax(0,1fr)] gap-x-1.5">
          <div>
            <div className="flex h-[29px] items-end justify-between">
              <label htmlFor="parts"><Caption text="零件明细表" k="P" colon /></label>
              <div className="mt-1 flex gap-[5px] self-start">
                <ToolButton name="brush" />
                <ToolButton name="props" />
                <ToolButton name="tree" />
                <ToolButton name="glasses" />
              </div>
            </div>
            <ul id="parts" role="tree" className={clsx(MONO, 'h-[290px] border border-[#7f9db9] bg-white pt-px pl-[5px] text-[7px] leading-[11px]')}>
              <li role="treeitem" className="flex h-[11px] items-center">
                <svg viewBox="0 0 7 7" className="mr-2 size-[7px]"><path d="M.5.500h6v6h-6z" fill="#fff" stroke="#9a9a9a" /><path d="M2 3.500h3" stroke="#000" /></svg>
                <Icon name="asm" size="size-2.5" />
                <span className="ml-1 bg-[#316ac5] px-px text-white">carrier.asm:1</span>
              </li>
              {parts.map((part) => (
                <li key={part} role="treeitem" className="ml-4 flex h-[11px] items-center">
                  <svg viewBox="0 0 13 7" className="h-[7px] w-[13px]"><path d="M.5.500h6v6h-6z" fill="#fff" stroke="#8a8a8a" /><path d="M2 3.500h3M3.500 2v3" stroke="#000" /><path d="M8 3.500h5" stroke="#999" strokeDasharray="1 1" /></svg>
                  <Icon name="part" size="h-[11px] w-3" />
                  <span className="ml-0.5 bg-[#316ac5] px-px text-white">{part}</span>
                </li>
              ))}
            </ul>
            <fieldset className="mt-0.5 h-[33px] rounded-sm border border-[#d0d0bf] px-1">
              <legend className="px-px text-[#0046d5]"><Caption text="查询选定项" k="Q" /></legend>
              <div className="mt-0.5 flex items-center">
                <ToolButton name="querynew" />
                <div className="ml-[3px] flex h-[14px] w-[90px] border border-[#7f9db9] bg-white">
                  <select aria-label="查询" className="w-full appearance-none bg-white" />
                  <Chevron />
                </div>
                <div className="ml-auto flex gap-0.5">
                  <ToolButton name="query" />
                  <ToolButton name="turn" />
                </div>
              </div>
            </fieldset>
          </div>

          <div>
            <fieldset className="mt-0.5 mr-0.5 h-[188px] rounded-sm border border-[#d0d0bf] pr-1">
              <legend className="ml-0.5 px-0.5 text-[#0046d5]">选定零件的显示</legend>
              <div className="ml-1 flex h-4 items-center justify-between">
                <Check text="显示" k="S" on />
                <ToolButton name="restore" />
              </div>
              <Check text="从装配派生 “显示为参考”" on className="ml-[15px] h-[15px]" />
              <Check text="作为参考显示" k="R" disabled className="ml-[26px] h-2" />
              <div className="ml-[15px] flex h-4 items-center gap-3">
                <Check text="剖面" k="N" on />
                <Check text="剪切标准件" k="Y" />
              </div>
              <div className="ml-[7px] flex h-5 items-center justify-between">
                <Check text="显示填充样式" k="F" on />
                <div className="relative flex h-[14px] w-[114px] border border-[#7f9db9] bg-white">
                  <select
                    aria-label="填充样式"
                    value={fillStyle}
                    onChange={(e) => setFillStyle(e.target.value)}
                    className={clsx(MONO, 'w-full appearance-none bg-white pl-px text-[7px]')}
                  >
                    {fillStyles.map((s) => <option key={s}>{s}</option>)}
                  </select>
                  <Chevron />
                  <div className="absolute top-[13px] -right-px -left-px z-20 flex h-[253px] border border-black bg-white">
                    <ul role="listbox" aria-label="填充样式" className={clsx(MONO, 'flex flex-1 flex-col text-[7px] leading-[8px] whitespace-nowrap')}>
                      {fillStyles.map((s) => (
                        <li
                          key={s}
                          role="option"
                          aria-selected={s === fillStyle}
                          onClick={() => setFillStyle(s)}
                          className={clsx('min-h-0 flex-1 pl-px', s === fillStyle && 'bg-[#316ac5] text-white')}
                        >
                          {s}
                        </li>
                      ))}
                    </ul>
                    <div className="flex w-2.5 flex-col bg-[#f5f5f0]">
                      <div className="h-3"><Chevron up /></div>
                      <div className="mt-[57px] flex flex-1 flex-col items-center justify-center gap-px rounded-xs bg-[#c1d3fb]">
                        <span className="h-px w-1 bg-[#eef4fe]" />
                        <span className="h-px w-1 bg-[#eef4fe]" />
                        <span className="h-px w-1 bg-[#eef4fe]" />
                      </div>
                      <div className="mt-px h-3"><Chevron /></div>
                    </div>
                  </div>
                  <svg viewBox="0 0 12 18" className="absolute top-0.5 left-[68px] z-30 h-[18px] w-3">
                    <path d="M3 3v11l2.500-2.500 2 4.500 1.500-.8-2-4.200h3.500z" fill="#fff" stroke="#222" strokeWidth=".8" />
                    <circle cx="1.500" cy="1.500" r="1.500" fill="#1a1af0" />
                  </svg>
                </div>
              </div>
              <Check text="从零件中" className="ml-[47px] h-3" />
              <div className="ml-[26px] flex h-[18px] items-center"><Caption text="可见边样式" k="V" colon /></div>
              <Check text="隐藏边样式" k="H" className="ml-[13px] h-5" />
              <Check text="显示被其它零" on className="ml-[30px] h-3" />
              <Check text="相切边样式" k="T" className="ml-[15px] h-5" />
              <div className="ml-2 flex h-3 items-center text-[#aca899]"><Caption text="管件中心线样式" k="U" colon /></div>
            </fieldset>
            <div className="mt-2 mr-[7px] ml-[18px] flex h-[123px] items-center border border-[#8f8d80] pl-16 text-[11px]">无</div>
            <fieldset className="mt-1 h-[33px] rounded-sm border border-[#d0d0bf] px-[3px]">
              <legend className="px-px whitespace-nowrap text-[#0046d5]">
                配置或 <span className={clsx(MONO, 'text-[7px]')}>PMI</span> <Caption text="模型视图" k="C" />
              </legend>
              <div className="mt-0.5 flex items-center gap-0.5 text-[#aca899]">
                <div className="flex h-[15px] w-[118px] shrink-0 border border-[#d3d0c0] bg-[#ece9d8]">
                  <select disabled aria-label="模型视图" className="w-full appearance-none pl-3.5 leading-[12px]">
                    <option>无选择</option>
                  </select>
                  <Chevron muted />
                </div>
                <button disabled className="h-[14px] w-10 shrink-0 rounded-xs border border-[#d3d0c0]"><Caption text="检查" k="K" /></button>
                <Check text="匹配" k="M" disabled className="ml-0.5" />
              </div>
            </fieldset>
          </div>
        </div>
        <div className="mt-[6px] h-[11px] border border-t-[#aca899] border-r-white border-b-white border-l-[#aca899]" />
      </div>

      <footer className="mt-[5px] flex justify-end gap-1.5 pr-[5px]">
        {['确定', '取消', '帮助'].map((name, i) => (
          <button
            key={name}
            className={clsx(
              'h-[14px] w-[51px] rounded-sm border border-[#003c74] bg-[#f7f6f1] leading-[12px]',
              i === 0 && 'inset-ring-1 inset-ring-[#a9c3f3]',
            )}
          >
            {name}
          </button>
        ))}
      </footer>
      <svg viewBox="0 0 7 7" className="absolute right-0 bottom-0 size-[7px]">
        <path d="M0 7l7-7M3 7l4-4M5.500 7L7 5.500" stroke="#aca899" />
      </svg>
    </section>
  )
}

export default function App() {
  return (
    <div className={clsx(CJK, 'relative min-h-screen overflow-hidden bg-[#ece9d8] text-[8px]')}>
      <header className="flex h-[18px] items-center gap-1 bg-linear-to-b from-[#7b96e0] via-[#7b98e2] to-[#7fa3ea] pl-px text-[#e3ebfc]">
        <svg viewBox="0 0 10 12" className="h-3 w-2.5">
          <path d="M0 1h10v10H0z" fill="#e6f4ff" />
          <path d="M0 3l4 2v5L0 8zM5 5l4-2v4L6 10z" fill="#2490d0" />
          <path d="M2 1l3 2 3-2" stroke="#1b5f9c" fill="none" />
        </svg>
        <p className="text-[10px] font-bold whitespace-pre">
          <span className={clsx(MONO, 'text-[9px]')}>Solid Edge V20 - </span>工程图
          <span className={clsx(MONO, 'text-[9px]')}> - [</span>工程图<span className={clsx(MONO, 'text-[9px]')}>1]</span>
        </p>
      </header>

      <nav className="flex h-[13px] items-center gap-[9px] pl-px text-[#a5a294]">
        <svg viewBox="0 0 11 12" className="-mr-1 h-3 w-[11px]">
          <path d="M.5.500h10v11H.5z" fill="#fff" stroke="#111" />
          <path d="M2 9V6h2V3h3v3h2v3z" fill="#111" />
        </svg>
        {menus.map(([text, k]) => (
          <button key={text} className="shrink-0"><Caption text={text} k={k} /></button>
        ))}
      </nav>

      <div className="h-[86px] border-t border-white">
        <div className="flex w-fit border-t border-b border-t-[#c9c6b6] border-b-[#d8d5c6] pl-[7px]">
          <Bar label="标准" className="pr-[5px]" items="new v open save | print | cut copy paste | undo v redo v | flag | grid *target dimedit *relate zoomarea zoomwin zoomin fit pan refresh | help" />
          <Bar label="零件明细" grip className="pr-1.5 pl-[3px]" items="g1 g2 g3 g4 g5 sheet balloon lockx lock2 sheets" />
        </div>
        <div className="flex w-fit border-b border-[#d8d5c6] pl-1.5">
          <Bar label="图纸视图" className="pr-[5px]" items="pointer | v1 v2 v3 v4 v5 v v6 v7 v8 v | v9 | d1 d2 v d3 d4 d5 d6 v | d7 v d8 v d9 v | letter v" />
          <Bar label="插入" grip className="pr-1.5 pl-[3px]" items="frame tee image link attach letter style sheet props list tbl pickpt nodes pins" />
        </div>
        <div className="flex w-fit border-b border-[#d8d5c6] pl-[7px]">
          <Bar label="绘图" className="pr-[5px]" items="line v curve v arc v circle v rect | fillet v offset v | region v pattern v | fill | ruler v | sketch cube v | move v | dim3 v" />
        </div>
      </div>
      <div className="h-[15px] border-t-2 border-b-2 border-t-[#b1ae9f] border-b-[#a19f8f] bg-linear-to-b from-[#f4f2e6] to-[#e3e0cc]" />

      <main className="flex">
        <aside className="flex w-5 shrink-0 flex-col border-r-2 border-[#aca899] pt-0.5">
          <span className="mr-1 h-px bg-[#aca899]" />
          <div className="mt-[7px] flex h-[184px] flex-col pr-1">
            {relations.map((name) => (
              <button key={name} aria-label={name} className="flex min-h-0 flex-1 items-center justify-center">
                <Icon name={name} size="size-[11px]" />
              </button>
            ))}
          </div>
          <span className="mr-1 h-px bg-[#c5c2b2]" />
          <button aria-label="handles" className="mt-1 flex h-[15px] items-center justify-center pr-1"><Icon name="handles" size="size-[11px]" /></button>
          <span className="mt-1 h-px bg-[#aca899]" />
        </aside>
        <div className="flex-1 bg-white"><Drawing /></div>
      </main>

      <p className="pointer-events-none absolute top-0 left-[119px] flex items-start text-[27px] leading-[26px] whitespace-nowrap text-[#55aa0a]">
        <span>中国最专业的</span>
        <b className='font-["Liberation_Sans",sans-serif] text-[26px]'>Solid Edge</b>
        <span>技术论坛</span>
        <b className='ml-7 font-["Liberation_Sans",sans-serif] text-[26px]'>WWW.3DST.COM</b>
      </p>

      <PropertiesDialog />
    </div>
  )
}
